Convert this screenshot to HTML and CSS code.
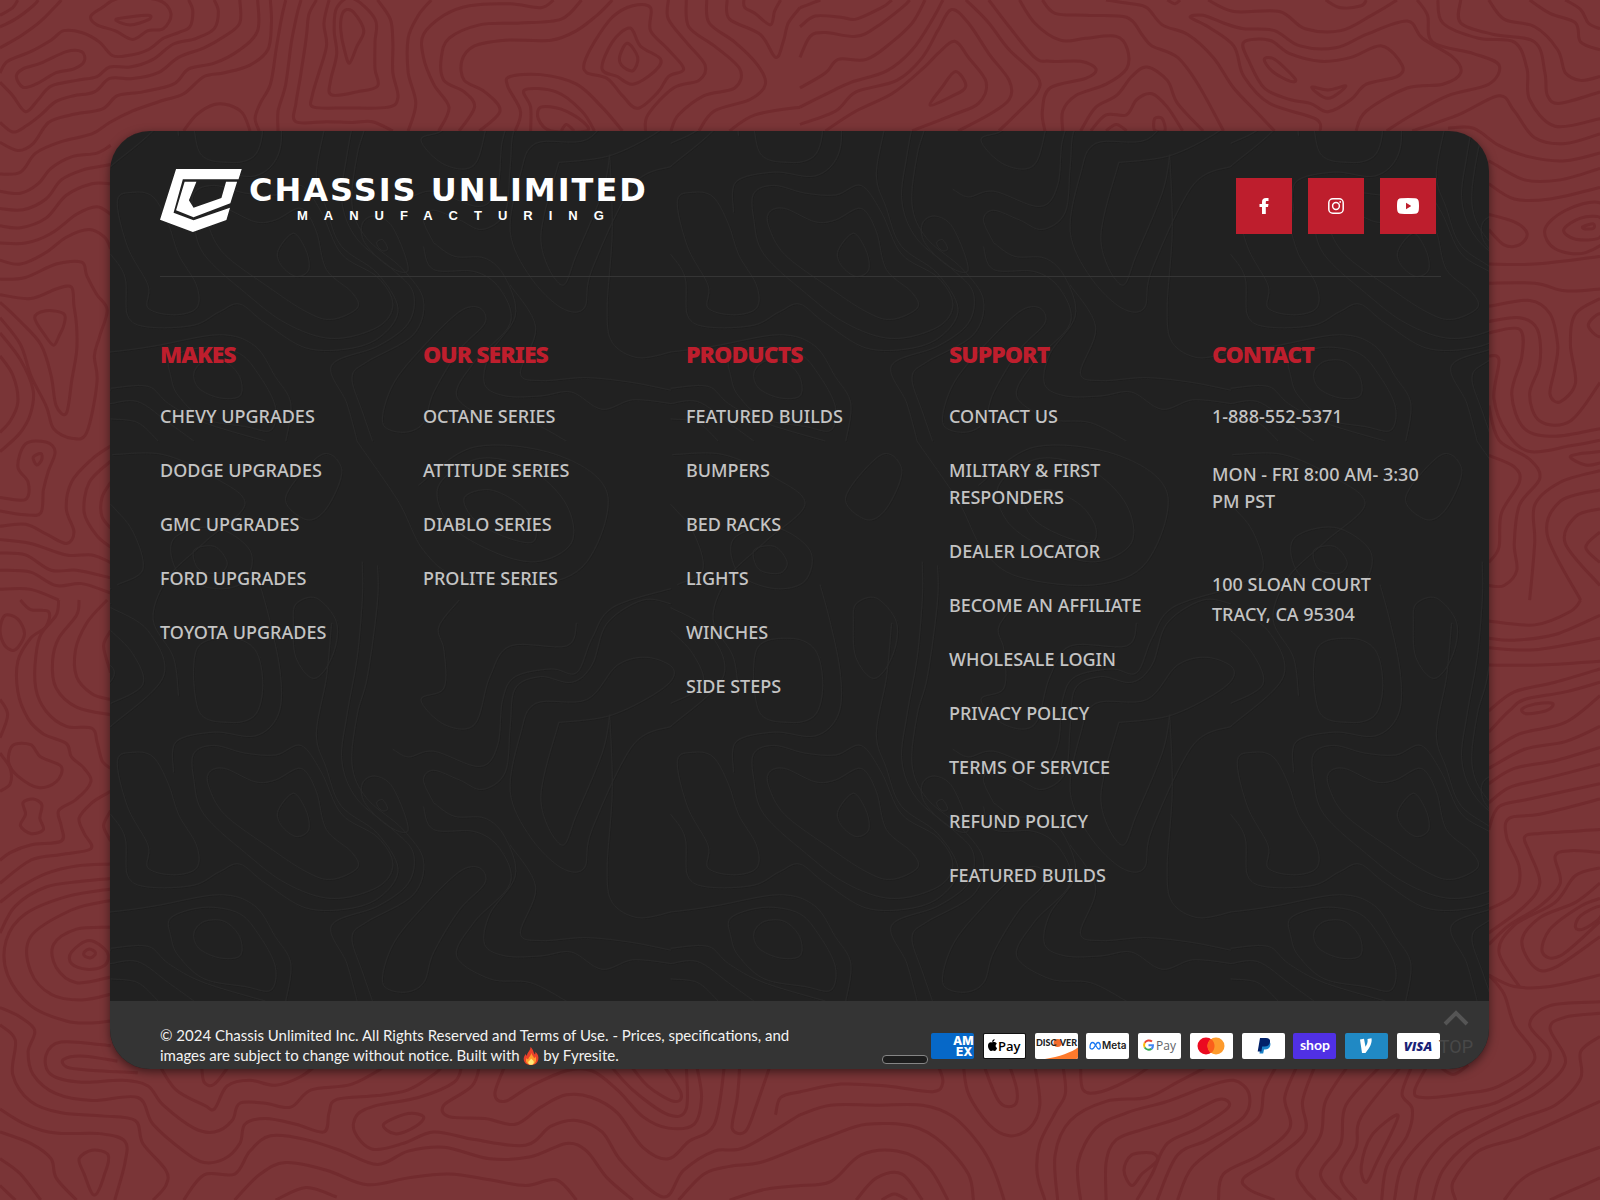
FILE: index.html
```html
<!DOCTYPE html>
<html lang="en">
<head>
<meta charset="utf-8">
<meta name="viewport" content="width=device-width, initial-scale=1">
<title>Chassis Unlimited Manufacturing</title>
<link rel="stylesheet" href="styles.css">
</head>
<body>
<svg class="page-lines" viewBox="0 0 1600 1200" preserveAspectRatio="xMidYMid slice" aria-hidden="true">
  <g id="lines-tl" transform="scale(.5102 .3827)"></g>
  <g id="lines-tr" transform="translate(800 0) scale(.5102 .3827)"></g>
  <g id="lines-bl" transform="translate(0 600) scale(.5102 .3827)"></g>
  <g id="lines-br" transform="translate(800 600) scale(.5102 .3827)"></g>
</svg>

<footer class="footer">
  <div class="footer-main">
    <svg class="card-lines" aria-hidden="true">
      <defs>
        <g id="tile-lines" transform="translate(-110 469) scale(.5102 .3827)"></g>
        <pattern id="tile" width="560" height="560" patternUnits="userSpaceOnUse">
          <g class="tile-dark" id="tile-dark" transform="translate(1 1)"></g>
          <g class="tile-light" id="tile-light"></g>
        </pattern>
      </defs>
      <rect width="100%" height="100%" fill="url(#tile)"/>
    </svg>

    <div class="footer-head">
      <a class="logo" href="#" aria-label="Chassis Unlimited Manufacturing">
        <svg class="logo-mark" viewBox="0 0 82 63" aria-hidden="true">
          <g transform="scale(.357 .3333) translate(-168 -147)" fill="#fff">
            <path d="M213 147H397L388 178H232L206 278L262 301L364 263L354 300L260 336L168 299Z"/>
            <path d="M237 185H270L249 241L262 263L340 234L353 185H384L365 250L262 292L213 271Z"/>
          </g>
        </svg>
        <span class="logo-text">
          <span class="logo-name">CHASSIS UNLIMITED</span>
          <span class="logo-sub">MANUFACTURING</span>
        </span>
      </a>
      <nav class="social" aria-label="Social media">
        <a href="#" aria-label="Facebook"><svg width="10" height="16" viewBox="0 0 10 16"><path fill="#fff" d="M3 16V9H.500V6H3V4C3 1.400 4.400 0 7 0h2.500v3H8C7 3 6.800 3.400 6.800 4.200V6H9.500L9 9H6.800v7z"/></svg></a>
        <a href="#" aria-label="Instagram"><svg width="16" height="16" viewBox="0 0 16 16" fill="none" stroke="#fff" stroke-width="1.500"><rect x=".8" y=".8" width="14.400" height="14.400" rx="4"/><circle cx="8" cy="8" r="3.400"/><circle cx="12.200" cy="3.900" r=".9" fill="#fff" stroke="none"/></svg></a>
        <a href="#" aria-label="YouTube"><svg width="22" height="16" viewBox="0 0 22 16"><path fill="#fff" fill-rule="evenodd" d="M4 .3Q11-.3 18 .3Q21.500.5 21.800 4Q22.200 8 21.800 12Q21.500 15.500 18 15.700Q11 16.300 4 15.700Q.5 15.500.2 12Q-.2 8 .2 4Q.5.5 4 .3ZM9 4.700v6.600L14.300 8z"/></svg></a>
      </nav>
    </div>

    <div class="columns">
      <section>
        <h2>MAKES</h2>
        <ul>
          <li><a href="#">CHEVY UPGRADES</a></li>
          <li><a href="#">DODGE UPGRADES</a></li>
          <li><a href="#">GMC UPGRADES</a></li>
          <li><a href="#">FORD UPGRADES</a></li>
          <li><a href="#">TOYOTA UPGRADES</a></li>
        </ul>
      </section>
      <section>
        <h2>OUR SERIES</h2>
        <ul>
          <li><a href="#">OCTANE SERIES</a></li>
          <li><a href="#">ATTITUDE SERIES</a></li>
          <li><a href="#">DIABLO SERIES</a></li>
          <li><a href="#">PROLITE SERIES</a></li>
        </ul>
      </section>
      <section>
        <h2>PRODUCTS</h2>
        <ul>
          <li><a href="#">FEATURED BUILDS</a></li>
          <li><a href="#">BUMPERS</a></li>
          <li><a href="#">BED RACKS</a></li>
          <li><a href="#">LIGHTS</a></li>
          <li><a href="#">WINCHES</a></li>
          <li><a href="#">SIDE STEPS</a></li>
        </ul>
      </section>
      <section>
        <h2>SUPPORT</h2>
        <ul>
          <li><a href="#">CONTACT US</a></li>
          <li><a href="#">MILITARY &amp; FIRST RESPONDERS</a></li>
          <li><a href="#">DEALER LOCATOR</a></li>
          <li><a href="#">BECOME AN AFFILIATE</a></li>
          <li><a href="#">WHOLESALE LOGIN</a></li>
          <li><a href="#">PRIVACY POLICY</a></li>
          <li><a href="#">TERMS OF SERVICE</a></li>
          <li><a href="#">REFUND POLICY</a></li>
          <li><a href="#">FEATURED BUILDS</a></li>
        </ul>
      </section>
      <section class="contact">
        <h2>CONTACT</h2>
        <p><a href="tel:18885525371">1-888-552-5371</a></p>
        <p class="hours">MON - FRI 8:00 AM- 3:30 PM PST</p>
        <address>100 SLOAN COURT<br>TRACY, CA 95304</address>
      </section>
    </div>
  </div>

  <div class="footer-bar">
    <p class="copyright">© 2024 Chassis Unlimited Inc. All Rights Reserved and <a href="#">Terms of Use.</a> - Prices, specifications, and images are subject to change without notice. Built with <svg class="flame" viewBox="0 0 16 18" role="img" aria-label="fire"><path fill="#e8402a" d="M7.500 0C11 3 10 5.500 12 7.500C12.500 6.500 12.400 5.500 12.200 4.800C15 7 16 10 15.200 13C14.500 16 12 18 8 18S1.300 16 .8 13C.3 10.500 1.500 8.500 2.800 7C3 8 3.400 8.500 4 8.800C4 5 7.500 4 7.500 0Z"/><path fill="#ff9a2b" d="M8.300 6C9 8.500 11 9.500 11 11.200C12 10.700 12.300 10 12.300 9.300C14 12 13.500 17.600 8 17.800C3.500 17.600 2 14 3.600 11C4 12 4.600 12.300 5.200 12.300C5.500 10 8 9 8.300 6Z"/><path fill="#ffe87a" d="M8 11.500C9.500 13 11 13.800 10.800 15.500C10.500 17 9.500 17.800 8 17.800S5.300 17 5.200 15.500C5.200 14 7.300 13.500 8 11.500Z"/></svg> by <a href="#">Fyresite.</a></p>

    <div class="bar-right">
      <select class="region" aria-label="Country"></select>
      <ul class="payments">
        <li><svg viewBox="0 0 43 26" role="img" aria-label="American Express"><rect width="43" height="26" rx="2" fill="#0668c8"/><g font-family="Inter, sans-serif" font-weight="800" font-size="12" fill="#fff"><text x="22" y="12">AM</text><text x="25" y="23">EX</text></g></svg></li>
        <li><svg viewBox="0 0 43 26" role="img" aria-label="Apple Pay"><rect width="43" height="26" rx="2" fill="#111"/><rect x="1" y="1" width="41" height="24" rx="1" fill="#fff"/><path d="M9 9.500c-2-1-4 .3-4 3.200 0 2.600 1.700 5.300 3.200 5.300.7 0 1-.4 1.700-.4s1 .4 1.700.4c1.100 0 2.100-1.700 2.500-3-1.800-.8-2-3.400-.3-4.300-1.200-1.700-3.200-1.900-4.800-1.200zM9.200 9C9 7.500 10.200 6.300 11.600 6c.2 1.500-1 2.900-2.400 3z"/><text x="15" y="18" font-family="Open Sans, sans-serif" font-weight="600" font-size="13">Pay</text></svg></li>
        <li><svg viewBox="0 0 43 26" role="img" aria-label="Discover"><rect width="43" height="26" rx="2" fill="#fff"/><path d="M10 26C24 24 37 19 43 14.500V24a2 2 0 0 1-2 2z" fill="#fd7a2c"/><circle cx="22.500" cy="10" r="4" fill="#f36c2c"/><g font-family="Lato, sans-serif" font-weight="900" font-size="9" fill="#222"><text x="1" y="13">DISC</text><text x="42" y="13" text-anchor="end">VER</text></g></svg></li>
        <li><svg viewBox="0 0 43 26" role="img" aria-label="Meta Pay"><rect width="43" height="26" rx="2" fill="#fff"/><path d="M4 14.500c0-3 1.200-5 2.800-5 2.700 0 3.700 6.500 6 6.500 1 0 1.500-.8 1.500-2.200 0-2.300-1-4.300-2.400-4.300-2.200 0-3.200 6.500-6 6.500-1.200 0-1.900-.4-1.900-1.500z" fill="none" stroke="#1878f2" stroke-width="1.300"/><text x="16" y="16" font-family="Inter, sans-serif" font-weight="600" font-size="10" fill="#222">Meta</text></svg></li>
        <li><svg viewBox="0 0 43 26" role="img" aria-label="Google Pay"><rect width="43" height="26" rx="2" fill="#fff"/><g fill="none" stroke-width="2"><path d="M14 8.500A5 5 0 0 0 6.700 9.700" stroke="#ea4335"/><path d="M6.700 9.700A5 5 0 0 0 6.700 14.500" stroke="#fbbc04"/><path d="M6.700 14.500A5 5 0 0 0 13.500 15.900" stroke="#34a853"/><path d="M13.500 15.900A4.500 4.500 0 0 0 15 12.300H10.500" stroke="#4285f4"/></g><text x="18" y="17" font-family="Open Sans, sans-serif" font-size="12" fill="#5f6368">Pay</text></svg></li>
        <li><svg viewBox="0 0 43 26" role="img" aria-label="Mastercard"><rect width="43" height="26" rx="2" fill="#fff"/><circle cx="16" cy="13" r="8.500" fill="#eb0a20"/><circle cx="26" cy="13" r="8.500" fill="#fd9a2c"/><path d="M21 6.100a8.500 8.500 0 0 1 0 13.800a8.500 8.500 0 0 1 0-13.800z" fill="#fb5f1b"/></svg></li>
        <li><svg viewBox="0 0 43 26" role="img" aria-label="PayPal"><rect width="43" height="26" rx="2" fill="#fff"/><path d="M19 8h6.500c3 .5 3.500 3 2.500 5.500-.8 2-2.500 3-5 3h-1l-.8 4H17.500z" fill="#1a82c8"/><path d="M18 5h6c2.800 0 4.500 1.500 4 4-.5 3-2.500 4.500-5.500 4.500H20.200l-.8 5H15.700z" fill="#012169"/></svg></li>
        <li><svg viewBox="0 0 43 26" role="img" aria-label="Shop Pay"><rect width="43" height="26" rx="2" fill="#5030e5"/><text x="22" y="17" text-anchor="middle" font-family="Lato, sans-serif" font-weight="700" font-size="14" fill="#fff">shop</text></svg></li>
        <li><svg viewBox="0 0 43 26" role="img" aria-label="Venmo"><rect width="43" height="26" rx="2" fill="#2089c4"/><path d="M15 6.500l4-.8 1.500 8C22 11.500 23 9 22.500 6l4-.7c1 5-2.500 10.500-6 14.700h-3.500z" fill="#fff"/></svg></li>
        <li><svg viewBox="0 0 43 26" role="img" aria-label="Visa"><rect width="43" height="26" rx="2" fill="#fff"/><text x="21" y="18" text-anchor="middle" font-family="Open Sans, sans-serif" font-style="italic" font-weight="800" font-size="13" fill="#1a2378">VISA</text></svg></li>
      </ul>
    </div>
    <a class="to-top" href="#"><svg width="26" height="17" viewBox="0 0 26 17" aria-hidden="true"><path d="M2 15L13 4L24 15" fill="none" stroke="#555" stroke-width="4"/></svg><span>TOP</span></a>
  </div>
</footer>
<script src="contours.js"></script>
</body>
</html>
```
FILE: styles.css
```css
* {
  box-sizing: border-box;
}

body {
  margin: 0;
  min-height: 100vh;
  position: relative;
  padding: 131px 111px 131px 110px;
  background: #7a3537;
  font-family: "Noto Sans", sans-serif;
  color: #c4c4c4;
}

a {
  color: inherit;
  text-decoration: none;
}

ul {
  list-style: none;
  margin: 0;
  padding: 0;
}

p {
  margin: 0;
}

.page-lines {
  position: absolute;
  inset: 0;
  width: 100%;
  height: 100%;
  z-index: -1;
  fill: none;
  stroke: #722b2e;
  stroke-width: 3px;
}

.page-lines path,
.card-lines path {
  vector-effect: non-scaling-stroke;
}

.footer {
  border-radius: 40px;
  overflow: hidden;
  box-shadow: 0 3px 10px rgba(0, 0, 0, 0.5);
  background: #212121;
}

.footer-main {
  position: relative;
  padding: 0 48px 112px 50px;
}

.card-lines {
  position: absolute;
  inset: 0;
  width: 100%;
  height: 100%;
  fill: none;
  stroke-width: 1px;
}

.tile-light {
  stroke: #282828;
}

.tile-dark {
  stroke: #1d1d1d;
}

.footer-head {
  position: relative;
  display: flex;
  justify-content: space-between;
  align-items: flex-start;
  height: 146px;
  padding: 38px 5px 0 0;
  border-bottom: 1px solid #353535;
}

.logo {
  display: flex;
  gap: 7px;
  color: #fff;
}

.logo-mark {
  width: 82px;
  height: 63px;
}

.logo-text {
  display: flex;
  flex-direction: column;
  padding-top: 6px;
}

.logo-name {
  font: 700 32px/30px "DejaVu Sans", sans-serif;
  letter-spacing: 2px;
}

.logo-sub {
  padding-left: 48px;
  font: 700 13px/22px "Liberation Sans", sans-serif;
  letter-spacing: 16px;
}

.social {
  display: flex;
  gap: 16px;
  padding-top: 9px;
}

.social a {
  display: flex;
  align-items: center;
  justify-content: center;
  width: 56px;
  height: 56px;
  background: #be1e2d;
}

.columns {
  position: relative;
  display: grid;
  grid-template-columns: repeat(5, 1fr);
  gap: 34px;
  padding-top: 62px;
}

h2 {
  margin: 0 0 34px;
  color: #be1e2d;
  font-size: 23px;
  font-weight: 900;
  line-height: 30px;
  letter-spacing: -1px;
}

.columns ul {
  display: grid;
  gap: 27px;
}

.columns li,
.contact p {
  font-size: 18px;
  font-weight: 500;
  line-height: 27px;
}

.contact .hours {
  margin-top: 31px;
}

address {
  margin-top: 54px;
  font-size: 18px;
  font-weight: 500;
  font-style: normal;
  line-height: 30px;
}

.footer-bar {
  position: relative;
  display: flex;
  justify-content: space-between;
  align-items: flex-start;
  height: 68px;
  padding: 24px 49px 0 50px;
  background: #343434;
}

.copyright {
  width: 640px;
  color: #f2f2f2;
  font: 400 15px/20px Lato, sans-serif;
}

.flame {
  width: 16px;
  height: 18px;
  vertical-align: -4px;
}

.bar-right {
  display: flex;
  gap: 3px;
  padding-top: 8px;
}

.region {
  appearance: none;
  align-self: flex-end;
  width: 46px;
  height: 9px;
  margin-bottom: -5px;
  padding: 0;
  border: 1px solid #858585;
  border-radius: 4px;
  background: #1d1d1d;
}

.payments {
  display: flex;
  justify-content: space-between;
  width: 509px;
}

.payments svg {
  display: block;
  width: 43px;
  height: 26px;
}

.to-top {
  position: absolute;
  top: 8px;
  right: 16px;
  display: flex;
  flex-direction: column;
  align-items: center;
  gap: 10px;
  color: #484848;
  font: 400 18px/22px Roboto, sans-serif;
}
```
FILE: contours.js
```js
// Contour lines: each entry lists points of a smooth curve; a leading "z" closes it.
const contours = {
  'lines-tl': [
    'z228,50 290,40 290,52 255,65', 'z200,20 235,-5 310,0 335,35 320,75 290,80 260,103 225,80 190,65 178,42',
    'z32,200 45,180 80,165 130,135 160,135 165,160 145,180 110,190 70,220 45,228',
    '0,125 45,90 80,55 110,15 120,0', '0,70 30,50 65,15 75,0', '0,40 25,20 35,0',
    '0,190 15,160 60,135 100,105 125,80 160,85 195,110 220,145 250,145 290,130 320,100 350,85 372,70 378,30 370,0',
    '0,215 25,250 50,292 75,260 100,225 150,210 190,200 215,175 255,175 300,155 340,115 385,100 420,75 428,30 420,0',
    '0,320 25,345 50,330 80,300 110,265 145,250 185,240 215,205 260,205 310,190 350,150 400,125 440,95 470,60 470,0',
    '0,372 35,393 65,375 95,320 140,300 200,285 230,250 280,240 340,220 370,180 420,165 470,130 505,80 505,0',
    '0,455 40,450 70,400 120,370 180,350 215,320 260,290 320,262 360,245 400,200 440,190 490,170 525,130 532,60 530,0',
    '360,342 385,300 420,273 450,275 475,295 490,342', '508,342 500,310 510,270 530,220 540,140 550,60 560,0',
    '545,342 545,290 560,220 570,120 580,50 590,0', '770,342 730,318 690,320 640,318 580,318 580,270 590,190 600,100 605,40 620,0',
    '645,0 635,60 640,120 625,190 612,250 615,280 680,282 760,280 780,255 770,190 770,110 765,50 740,0',
    'z660,20 690,-5 735,50 735,110 735,180 740,225 700,240 650,248 648,210 660,140 655,80',
    'z680,25 695,35 713,80 700,120 685,165 675,130 668,80 670,40', '800,342 815,270 800,190 800,100 820,40 845,0',
    '860,342 880,280 850,220 830,150 830,90 870,40 920,15 1000,10 1060,20 1085,0',
    '900,342 930,280 910,240 870,210 865,150 880,100 940,65 1020,60 1100,50 1140,0',
    '940,342 980,290 950,240 910,210 905,160 930,120 990,105 1080,105 1130,80 1170,40 1200,0',
    'z1145,165 1165,110 1200,45 1240,15 1275,20 1275,80 1310,130 1340,180 1310,200 1290,240 1250,283 1220,250 1190,205 1150,190',
    'z1180,180 1200,110 1235,73 1255,120 1295,155 1280,190 1240,220 1210,200', 'z1215,145 1230,113 1250,150 1240,185 1218,170',
    '1310,0 1310,50 1345,110 1382,170 1370,210 1320,230 1270,300 1265,342',
    '1345,0 1350,70 1400,120 1450,180 1440,230 1380,250 1330,300 1315,342',
    '1385,0 1390,60 1440,110 1485,170 1500,220 1470,260 1400,290 1370,342',
    '1425,0 1430,50 1490,90 1520,150 1535,110 1545,60 1568,20', '1458,0 1460,20 1480,35 1510,65 1518,30 1530,0',
    '1010,342 1020,290 995,225 1000,200 1060,195 1130,220 1180,280 1220,342', '1040,342 1040,280 1028,235 1090,240 1140,290 1165,342',
    'z1060,280 1100,285 1140,315 1150,342 1080,342 1055,310', '1100,342 1110,325 1125,342', '1430,342 1480,300 1568,280',
    '0,500 40,505 75,480 100,440 140,410 190,400 217,380', '0,545 45,548 90,520 120,470 160,445 217,430',
    '0,590 40,595 90,570 130,510 180,480 217,480', '0,635 50,635 100,610 150,560 190,540 217,560',
    '0,680 40,690 90,660 130,620 175,600 205,620 217,650',
    '0,730 50,725 110,690 160,685 170,720 190,770 210,810 195,880 185,930 190,1000 170,1130 140,1145 105,1120 90,1060 60,980 40,900 0,830',
    '0,770 60,780 110,755 140,750 145,800 150,850 150,920 140,1000 130,1080 110,1060 100,980 80,900 40,840 0,790',
    'z68,830 90,812 125,820 125,850 115,880 105,902 90,880', '0,870 40,940 65,1020 60,1080 40,1130 0,1180',
    '0,930 25,980 35,1050 20,1100 0,1130', 'z65,1195 80,1185 82,1200 72,1215',
    '0,1300 50,1305 55,1260 35,1220 50,1160 90,1155 108,1180 95,1230 85,1280 80,1340 50,1345 0,1335',
    '217,1165 180,1200 140,1260 130,1330 145,1390 130,1420 90,1395 50,1370 0,1375', '217,1205 175,1260 165,1340 190,1400 217,1430',
    '217,1260 200,1300 200,1350 217,1380', '0,1410 60,1420 130,1450 180,1450 217,1470', '0,1445 50,1450 100,1490 150,1490 217,1510',
    '0,1490 60,1495 110,1530 160,1525 217,1550', '0,1540 60,1540 115,1568'
  ],
  'lines-tr': [
    '0,20 40,0', '0,70 30,42 80,45 110,50 160,20 180,0', '0,150 20,95 50,85 110,95 150,70 200,20 215,0', '0,230 50,190 75,155 130,155 180,110 220,60 245,0',
    '0,325 70,290 110,240 190,210 240,150 270,80 297,25 330,60 370,140 410,210 410,260 370,300 310,342',
    '50,342 110,290 180,245 240,180 270,140 303,108 330,150 365,215 350,270 300,300 220,342', 'z255,275 280,225 305,187 325,225 300,250',
    '0,280 60,240 100,215 170,185 220,130 260,50 280,0', '325,0 370,60 410,130 465,200 465,240 430,290 390,342',
    '370,0 410,70 460,150 490,160 550,160 580,180 560,205 490,230 475,290 480,342',
    '430,0 460,60 510,105 560,100 620,95 642,130 640,180 600,220 540,250 515,290 515,342',
    '475,0 500,35 560,40 640,45 670,90 690,120 740,150 780,220 830,342', '550,342 580,280 620,250 650,200 680,175 720,210 740,270 790,342',
    '570,342 600,300 640,300 660,260 690,245 720,280 750,342', 'z695,310 710,310 715,342 695,340', '600,342 620,325 640,342',
    '600,0 650,10 680,20 710,65 760,90 810,150 850,230 900,300 930,342', '720,0 735,10 745,0',
    '1090,342 1110,290 1190,230 1260,220 1295,190 1280,150 1220,100 1190,55 1110,90 1050,125 980,120 930,80 870,75 830,60 790,40 765,45 800,70 850,120 870,200 920,270 1010,310 1020,342',
    'z870,110 920,105 960,140 1020,160 1080,150 1140,120 1180,170 1170,200 1110,220 1080,260 1035,292 1000,270 960,260 910,230 880,160',
    'z910,155 930,155 970,205 960,212 925,185', 'z1003,228 1035,235 1070,225 1035,257',
    '800,0 850,30 940,30 990,75 1060,80 1120,40 1170,0', '1030,0 1060,20 1100,15 1110,0',
    '1210,0 1230,40 1240,110 1320,140 1370,170 1350,220 1270,250 1200,300 1150,342', '1250,0 1260,60 1330,100 1400,110 1425,180 1430,260 1480,330 1568,310',
    '1295,0 1295,60 1360,90 1440,110 1460,190 1465,250 1490,270 1568,240', '1350,0 1380,50 1440,70 1485,130 1500,190 1530,210 1568,200',
    '1430,0 1470,35 1520,60 1530,110 1568,130', '1500,0 1530,25 1545,60 1568,75', '1200,342 1290,300 1370,250 1400,290 1440,360 1500,375 1568,350',
    '1270,335 1320,335 1370,380 1430,410 1500,420 1568,400', '1350,420 1420,470 1490,470 1568,440', '1350,480 1400,520 1470,520 1568,490',
    '1350,560 1400,580 1425,610 1410,640 1380,640 1350,600', 'z1460,600 1500,550 1568,530 1600,600 1540,660 1480,650',
    'z1497,600 1530,570 1570,570 1568,620 1520,625', 'z1535,592 1555,585 1555,597 1537,598', '1350,690 1440,690 1568,670',
    '1350,740 1440,740 1500,760 1568,755', '1350,800 1430,785 1470,820 1485,900 1480,960 1470,1030 1490,1050 1520,1000 1510,900 1520,820 1568,780',
    '1350,840 1410,830 1445,860 1450,950 1430,1030 1450,1100 1510,1100 1568,1000', '1350,870 1410,860 1415,930 1395,1030 1420,1120 1480,1140 1568,1120',
    '1350,930 1370,940 1360,1040 1385,1130 1430,1180 1510,1165 1568,1150', 'z1545,850 1568,820 1590,850 1568,880',
    '1350,1060 1370,1150 1430,1200 1450,1250 1410,1320 1400,1420 1405,1490 1380,1530 1350,1530', '1350,1190 1400,1220 1410,1260 1375,1340 1370,1430 1350,1470',
    '1430,1568 1440,1420 1440,1320 1490,1260 1568,1230', '1568,1180 1530,1185 1510,1195 1540,1215 1568,1210',
    '1530,1568 1465,1400 1490,1310 1568,1280', '1568,1530 1500,1420 1520,1350 1568,1330', '1568,1470 1540,1430 1568,1390'
  ],
  'lines-bl': [
    '40,0 60,25 95,30 90,70 60,100 35,160 35,240 55,310 85,350 130,375 140,410 165,440 178,475 150,520 115,550 120,590 120,630 60,640 20,660 0,680',
    'z10,40 35,50 48,90 30,130 10,120 0,80', '115,0 110,40 80,90 70,150 70,230 90,290 130,330 180,335 190,370 200,420 217,440',
    '155,0 150,40 115,100 103,160 110,230 150,280 217,300', '210,0 170,60 148,130 150,200 180,245 217,260', '217,80 203,120 217,190',
    'z25,380 60,378 80,410 120,435 110,475 75,490 35,460 17,425', 'z45,530 65,520 82,535 78,570 85,600 60,610 40,590 50,560',
    '217,500 180,530 155,570 165,610 178,650 120,665 60,680 0,740', '217,550 203,590 217,630', '217,690 150,695 90,715 40,750 0,790',
    '217,728 160,735 90,750 30,800 0,870', '217,785 140,810 60,880 60,970 100,1030 160,1045 217,1030',
    '217,755 130,775 50,820 12,890 15,980 60,1060 130,1100 180,1105 217,1100', '217,855 150,860 105,900 110,960 150,1000 217,985',
    'z140,920 175,890 210,920 205,955 170,965 140,950', 'z165,920 175,912 187,922 178,935 166,930', '0,500 20,480 20,440 0,400', '0,260 15,300 0,360',
    '0,1065 40,1090 68,1125 55,1180 65,1240 110,1290 180,1308 270,1300 300,1370 360,1440 400,1470 440,1460 470,1420 480,1370 520,1355 580,1370 635,1390 645,1340 660,1305 740,1295 800,1280 850,1240 870,1215',
    '0,1110 30,1150 25,1240 60,1310 120,1340 200,1348 265,1360 280,1420 325,1490 325,1530 300,1568',
    '217,1165 120,1155 90,1190 100,1240 160,1260 240,1255 290,1270 320,1320 380,1380 420,1390 455,1360 470,1315 520,1315 570,1325 610,1280 690,1265 760,1215',
    '270,1235 170,1228 130,1220 125,1200 165,1192 230,1205', '310,1210 345,1280 400,1320 420,1330 445,1270 490,1255 540,1268 590,1245 620,1215',
    '395,1215 400,1260 420,1265 450,1215', '0,1330 50,1370 110,1393 200,1395 245,1415 245,1470 225,1568', '0,1390 60,1420 100,1460 110,1510 150,1568',
    'z155,1460 180,1438 212,1450 205,1500 185,1555 165,1500', '0,1460 40,1500 80,1568', '0,1530 30,1568',
    '360,1568 400,1502 460,1500 490,1440 530,1400 600,1410 670,1440 740,1475 800,1440 870,1430 960,1460 1040,1455 1110,1420 1150,1440 1190,1510 1240,1568',
    '460,1568 510,1500 560,1470 640,1490 720,1528 800,1510 880,1500 960,1515 1030,1530 1090,1515 1130,1568', '540,1568 600,1535 660,1560',
    '905,1215 890,1260 820,1300 740,1320 700,1345 695,1390 730,1435 790,1420 850,1390 930,1410 1030,1425 1080,1375 1130,1360 1180,1390 1220,1470 1300,1560 1340,1490 1400,1440 1460,1430 1568,1345',
    'z752,1370 800,1342 830,1350 815,1375 775,1395', '940,1215 925,1270 870,1320 880,1350 950,1355 1010,1370 1060,1325 1110,1293 1160,1300 1210,1340 1260,1430 1310,1460 1350,1415 1400,1370 1420,1215',
    '990,1215 970,1290 990,1310 1040,1270 1110,1230 1160,1230 1210,1280 1260,1350 1310,1380 1360,1370 1375,1300 1365,1215',
    '1195,1215 1240,1280 1310,1345 1345,1330 1345,1215', '1235,1215 1270,1270 1320,1310 1335,1290 1300,1215',
    '1450,1215 1445,1300 1435,1380 1460,1390 1480,1330 1510,1215', '1330,1568 1380,1500 1430,1480 1490,1470 1568,1430', '1430,1568 1500,1540 1568,1530', '1520,1345 1530,1300 1568,1285'
  ],
  'lines-br': [
    '0,1285 80,1265 170,1270 260,1285 280,1260 270,1215', '0,1345 60,1320 150,1320 240,1320 300,1350 350,1420 380,1490 400,1568',
    '0,1430 60,1400 130,1370 220,1375 280,1420 330,1500 340,1568', '0,1530 60,1520 120,1450 190,1440 250,1480 290,1568', '160,1568 185,1552 210,1568',
    '110,1568 150,1510 200,1500 240,1568', '320,1215 330,1290 370,1370 410,1400 450,1380 470,1320 460,1215', '360,1215 390,1310 420,1320 425,1280 410,1215',
    '515,1215 520,1290 500,1340 470,1420 465,1500 480,1568', '550,1215 555,1280 590,1285 650,1250 690,1215', '505,1568 500,1450 530,1360 600,1310 680,1300 740,1260 800,1218',
    '550,1568 545,1470 580,1380 640,1340 720,1310 800,1270 850,1255 880,1290 870,1350 800,1410 740,1450 700,1568',
    '600,1568 600,1470 620,1410 680,1380 750,1350 820,1305 840,1325 780,1380 720,1420 690,1500 660,1568', 'z635,1490 650,1450 690,1445 700,1465 670,1500 650,1530',
    '740,1568 770,1480 850,1400 900,1350 910,1280 935,1215', '975,1215 950,1300 960,1380 900,1450 830,1500 820,1568', '1010,1215 985,1310 990,1390 930,1460 870,1510 880,1540 930,1568',
    '1075,1215 1030,1310 1020,1400 975,1490 990,1540 1010,1568', '1140,1215 1070,1320 1060,1420 1020,1500 1060,1568', '1180,1215 1100,1350 1090,1430 1060,1510 1090,1568',
    'z1170,1345 1160,1390 1130,1470 1110,1522 1100,1480 1120,1400', '1200,1215 1180,1290 1200,1330 1190,1400 1150,1480 1140,1568',
    '1230,1215 1205,1280 1220,1300 1300,1290 1370,1270 1440,1200 1400,1110 1380,1030 1350,980', '1250,1215 1280,1240 1310,1215',
    '1165,1568 1180,1480 1230,1400 1290,1340 1370,1310 1450,1240 1470,1180 1430,1110 1470,1060 1568,1050', '1205,1568 1220,1490 1270,1410 1350,1350 1440,1290 1500,1210 1470,1120 1500,1090 1568,1080',
    '1240,1568 1260,1490 1310,1420 1400,1360 1480,1320 1530,1250 1530,1180 1568,1140', '1285,1568 1280,1520 1330,1440 1420,1400 1568,1310', '1380,1568 1430,1500 1568,1430', '1470,1568 1568,1510',
    '1350,55 1440,65 1510,30 1530,0', '1350,100 1400,105 1480,90 1568,40', '1350,125 1440,130 1568,100', '1350,170 1450,170 1568,160', '1350,290 1400,240 1480,215 1568,180',
    '1350,345 1390,290 1420,260 1500,240 1568,215', 'z1415,285 1440,272 1475,270 1465,288 1425,297', '1350,400 1410,350 1500,320 1568,250', '1350,440 1420,390 1500,370 1568,330',
    '1350,480 1400,440 1480,420 1568,385', '1350,530 1390,490 1450,470 1568,430', '1350,600 1370,540 1430,520 1568,480', '1350,808 1400,770 1410,700 1385,620 1390,570 1450,560 1568,520',
    '1350,870 1420,800 1450,740 1430,660 1420,620 1450,610 1568,600', '1350,900 1390,850 1450,800 1490,740 1480,670 1510,655 1568,660', '1410,1010 1370,920 1400,850 1480,790 1520,720 1568,700',
    '1568,740 1520,790 1450,830 1415,890 1440,960 1480,960 1568,880', '1568,780 1530,800 1470,860 1455,920 1490,930 1568,840', 'z1520,855 1530,825 1568,800 1568,830 1535,860', '1350,980 1400,1010 1470,1010 1568,980'
  ]
};

const tile = [
  'z380,870 400,840 440,840 470,880 470,930 430,935 390,910', 'z335,830 400,803 470,820 510,880 540,960 530,1020 480,1010 400,990 350,930 335,880',
  '217,815 300,800 430,770 500,800 540,880 570,950 560,1048', 'z290,640 290,700 340,718 385,700 385,640 350,560 330,480 300,410 260,398 230,420 250,540',
  '217,560 245,620 250,720 290,750 380,745 430,710 470,690 520,740 600,805 690,805 750,770 780,700 740,610 670,540 640,440 620,350 640,200 650,60',
  'z410,450 440,440 500,475 540,470 590,440 620,500 640,600 690,660 700,700 650,730 600,710 520,640 440,560 410,490', 'z545,550 575,505 600,550 605,600 580,618 552,590',
  'z710,480 735,460 770,490 800,600 760,590 715,530', 'z738,530 750,522 760,545 748,550',
  'z380,400 420,380 480,400 540,405 590,380 630,450 670,560 740,620 770,690 740,750 650,780 560,740 480,660 400,560 380,470',
  '340,450 345,370 420,345 500,355 545,300 550,200 530,60 510,-40', 'z385,130 390,290 450,320 500,300 515,220 500,130 450,100',
  '850,530 830,470 850,445 900,470 945,495 990,450 1000,330 1010,230 1060,200 1120,215 1160,170 1190,60 1260,0 1315,10',
  '770,390 800,410 850,395 940,435 975,380 985,260 1010,200 1080,180 1130,190 1160,100 1200,20 1315,-30',
  '850,530 890,565 950,570 990,620 1010,720 960,820 950,900 990,930 1060,930 1120,920 1180,965 1240,940 1315,950',
  '830,540 850,600 930,605 980,650 1000,740 930,840 895,930 960,990 1040,1000 1110,1048', '1000,640 1050,750 1020,870 1060,890 1150,882 1240,895 1315,915',
  'z750,1000 770,900 830,800 900,710 940,700 950,740 900,810 850,920 830,1000 790,1025', '1195,300 1200,500 1190,700 1200,790 1250,830 1315,815',
  '1095,320 1060,520 1100,640 1130,560 1180,400 1195,300', '1095,320 1200,300 1300,230 1320,180 1270,150 1210,170 1150,260 1050,270 1020,350 1000,500 1040,620 1100,700 1145,700 1160,600 1240,380 1315,330',
  '900,0 860,70 870,130 870,230 825,260 870,325 930,325 960,200 1000,120 1110,120 1130,60', 'z575,60 580,150 615,205 650,150 660,60 620,-5 580,10',
  '710,-100 710,0 700,150 680,300 670,420 700,520 770,600 810,660 800,740 740,800 650,850 680,950 700,1048', '740,-90 740,0 720,200 700,300 690,430 720,520 790,600 830,680 810,770 720,840 690,880 710,970 730,1048',
  'z910,-268 960,-288 1020,-248 1050,-190 1040,-150 980,-170 930,-210', 'z860,-300 940,-370 1040,-340 1110,-250 1120,-150 1050,-100 960,-130 880,-200',
  '700,-415 780,-260 830,-130 900,-60 1050,-40 1150,-100 1190,-280 1090,-380 930,-400 820,-300', '220,-380 320,-380 420,-320 480,-250 400,-150 330,-60 300,50 340,150 350,250',
  'z380,-130 420,-140 445,-100 430,-70 390,-80', 'z340,-160 420,-190 490,-130 480,-50 420,-30 350,-70', 'z560,-270 630,-380 670,-340 640,-240 600,-210',
  '217,-250 260,-180 280,-80 230,-40', '217,80 260,140 280,220 217,270', '217,20 290,80 320,200 217,330', '217,910 290,905 330,950 400,1000 520,1048', '217,950 270,945 330,1000 380,1048', '217,990 270,1000 310,1048'
];

// Catmull-Rom spline through the points, written as cubic Béziers.
function toPath(entry) {
  const closed = entry[0] === 'z';
  const p = entry.replace('z', '').split(' ').map(s => s.split(',').map(Number));
  const n = p.length;
  const at = i => closed ? p[(i + n) % n] : p[Math.max(0, Math.min(n - 1, i))];
  let d = 'M' + p[0];
  for (let i = 0; i < (closed ? n : n - 1); i++) {
    const [a, b, c, e] = [at(i - 1), at(i), at(i + 1), at(i + 2)];
    d += 'C' + [b[0] + (c[0] - a[0]) / 6, b[1] + (c[1] - a[1]) / 6,
      c[0] - (e[0] - b[0]) / 6, c[1] - (e[1] - b[1]) / 6, c[0], c[1]].map(Math.round);
  }
  return '<path d="' + d + (closed ? 'Z' : '') + '"/>';
}

for (const id in contours) {
  document.getElementById(id).innerHTML = contours[id].map(toPath).join('');
}
document.getElementById('tile-lines').innerHTML = tile.map(toPath).join('');
const copies = [-560, 0, 560].flatMap(x => [-1120, -560, 0].map(y => `<use href="#tile-lines" x="${x}" y="${y}"/>`)).join('');
document.getElementById('tile-dark').innerHTML = copies;
document.getElementById('tile-light').innerHTML = copies;
```
